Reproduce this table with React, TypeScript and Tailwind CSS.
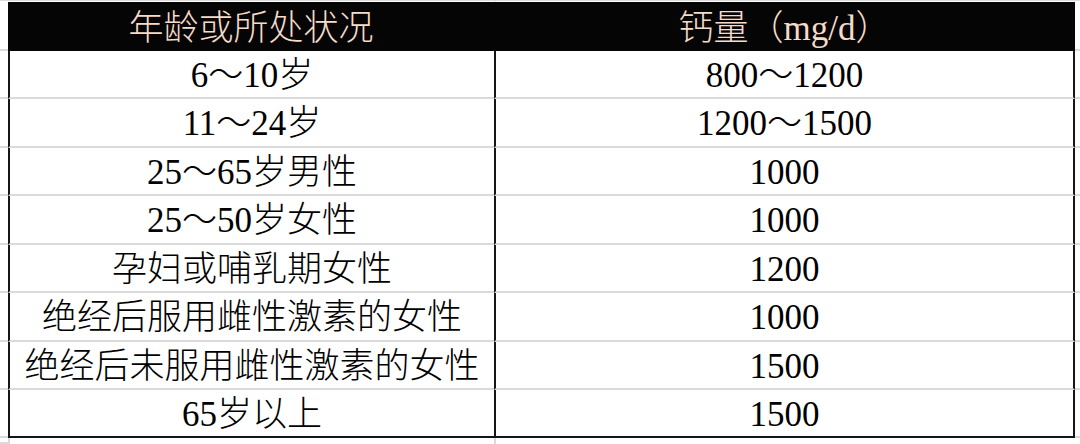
import React from 'react';

const rows = [
  { label: '6～10岁', value: '800～1200', h: 'h-[48px]' },
  { label: '11～24岁', value: '1200～1500', h: 'h-[49px]' },
  { label: '25～65岁男性', value: '1000', h: 'h-[48px]' },
  { label: '25～50岁女性', value: '1000', h: 'h-[49px]' },
  { label: '孕妇或哺乳期女性', value: '1200', h: 'h-[48px]' },
  { label: '绝经后服用雌性激素的女性', value: '1000', h: 'h-[49px]' },
  { label: '绝经后未服用雌性激素的女性', value: '1500', h: 'h-[48px]' },
  { label: '65岁以上', value: '1500', h: 'h-[48px]' },
];

export default function App() {
  return (
    <div className="w-[1080px] h-[444px] bg-white overflow-hidden font-['Liberation_Serif','Noto_Sans_CJK_SC',serif] font-light text-[35px] leading-none">
      {/* sheet gridline above the table */}
      <div className="flex h-[2px]">
        <div className="w-[494px] shrink-0 border-t border-[#dadada]" />
        <div className="flex-1 border-t border-l border-[#dadada]" />
      </div>

      {/* Header */}
      <div className="flex h-[49px]">
        <div className="w-[8px] shrink-0 border-b-2 border-[#dadada]" />
        <div className="w-[486px] shrink-0 bg-[#050505] text-[#f5dbc8] flex items-center justify-center pt-[3px]">
          年龄或所处状况
        </div>
        <div className="w-[581px] shrink-0 bg-[#050505] text-[#f5dbc8] flex items-center justify-center pt-[3px]">
          钙量（mg/d）
        </div>
        <div className="flex-1 border-b-2 border-[#dadada]" />
      </div>

      {/* Body */}
      {rows.map((r, i) => {
        const last = i === rows.length - 1;
        return (
          <div key={i} className={`flex ${r.h}`}>
            <div className="w-[8px] shrink-0 border-b-2 border-[#dadada]" />
            <div
              className={`w-[486px] shrink-0 flex items-center justify-center pt-[2px] border-l-2 border-l-[#151515] border-b-2 text-black ${
                last ? 'border-b-[#151515]' : 'border-b-[#dadada]'
              }`}
            >
              {r.label}
            </div>
            <div
              className={`w-[581px] shrink-0 flex items-center justify-center pt-[2px] border-l-2 border-r-2 border-l-[#151515] border-r-[#151515] border-b-2 text-black ${
                last ? 'border-b-[#151515]' : 'border-b-[#dadada]'
              }`}
            >
              {r.value}
            </div>
            <div className="flex-1 border-b-2 border-[#dadada]" />
          </div>
        );
      })}

      {/* sheet gridlines below the table */}
      <div className="flex h-[6px]">
        <div className="w-[8px] shrink-0 border-b-2 border-[#dadada]" />
        <div className="w-[486px] shrink-0 border-l-2 border-[#dadada]" />
        <div className="flex-1 border-l-2 border-[#dadada]" />
      </div>
    </div>
  );
}
